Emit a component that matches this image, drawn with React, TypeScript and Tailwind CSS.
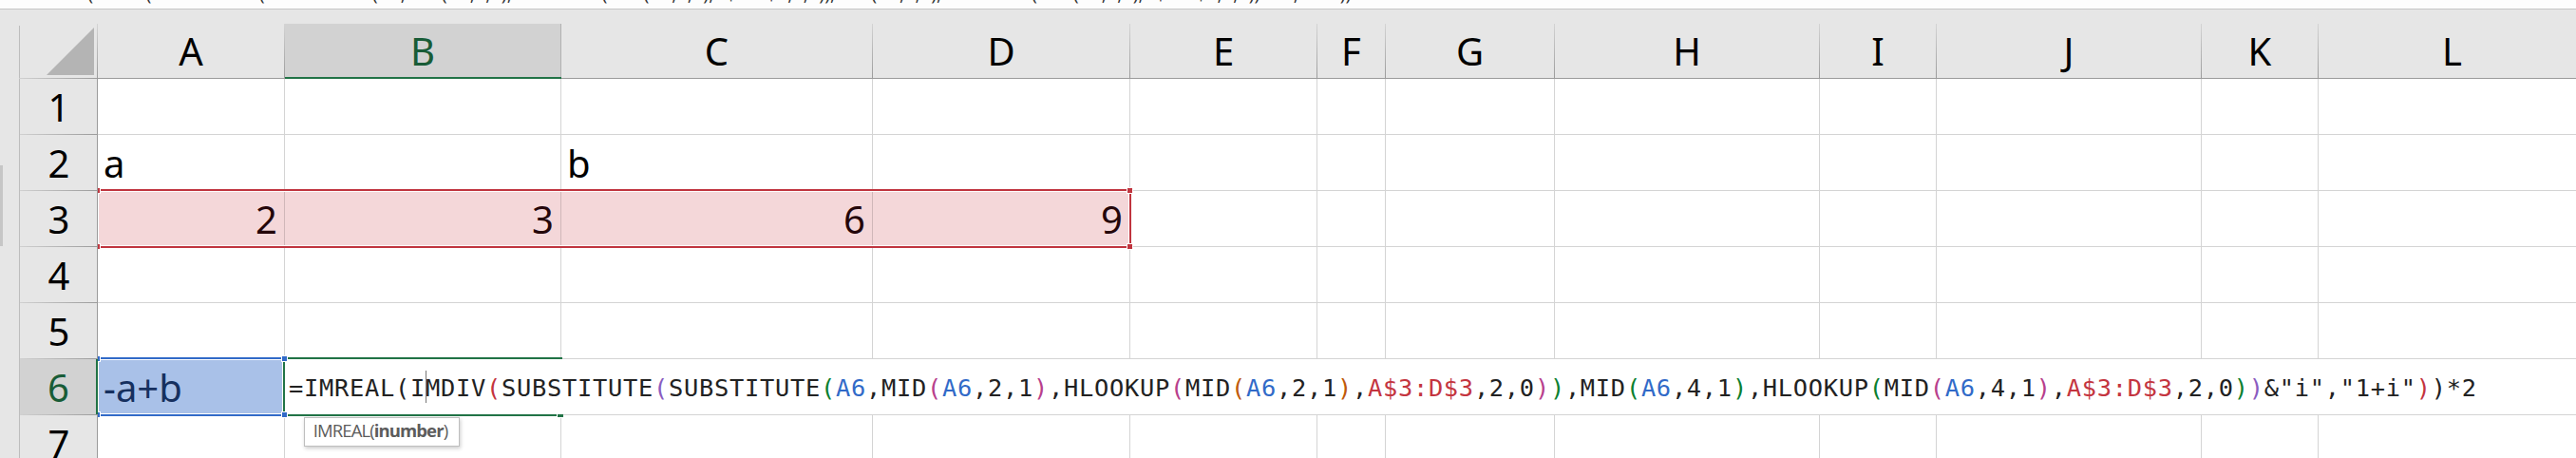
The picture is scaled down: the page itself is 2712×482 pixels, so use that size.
import { Fragment } from "react";

type Token = { text: string; className?: string };

const COLUMNS = [
  { name: "A", width: "w-[197px]" },
  { name: "B", width: "w-[291px]" },
  { name: "C", width: "w-[328px]" },
  { name: "D", width: "w-[271px]" },
  { name: "E", width: "w-[197px]" },
  { name: "F", width: "w-[72px]" },
  { name: "G", width: "w-[178px]" },
  { name: "H", width: "w-[279px]" },
  { name: "I", width: "w-[123px]" },
  { name: "J", width: "w-[279px]" },
  { name: "K", width: "w-[123px]" },
  { name: "L", width: "w-[281px]" },
];

const ROWS = [1, 2, 3, 4, 5, 6, 7];

const CELLS: Record<string, string> = {
  A2: "a",
  C2: "b",
  A3: "2",
  B3: "3",
  C3: "6",
  D3: "9",
  A6: "-a+b",
};

const BLUE = "text-[#316ac8]";
const RED = "text-[#c4353f]";
const PURPLE = "text-[#8a5cc0]";
const GREEN = "text-[#0b8030]";
const PINK = "text-[#b8408c]";
const ORANGE = "text-[#c05a0a]";

const FORMULA: Token[] = [
  { text: "=IMREAL(IMDIV" },
  { text: "(", className: RED },
  { text: "SUBSTITUTE" },
  { text: "(", className: PURPLE },
  { text: "SUBSTITUTE" },
  { text: "(", className: GREEN },
  { text: "A6", className: BLUE },
  { text: ",MID" },
  { text: "(", className: PINK },
  { text: "A6", className: BLUE },
  { text: ",2,1" },
  { text: ")", className: PINK },
  { text: ",HLOOKUP" },
  { text: "(", className: PINK },
  { text: "MID" },
  { text: "(", className: ORANGE },
  { text: "A6", className: BLUE },
  { text: ",2,1" },
  { text: ")", className: ORANGE },
  { text: "," },
  { text: "A$3:D$3", className: RED },
  { text: ",2,0" },
  { text: ")", className: PINK },
  { text: ")", className: GREEN },
  { text: ",MID" },
  { text: "(", className: GREEN },
  { text: "A6", className: BLUE },
  { text: ",4,1" },
  { text: ")", className: GREEN },
  { text: ",HLOOKUP" },
  { text: "(", className: GREEN },
  { text: "MID" },
  { text: "(", className: PINK },
  { text: "A6", className: BLUE },
  { text: ",4,1" },
  { text: ")", className: PINK },
  { text: "," },
  { text: "A$3:D$3", className: RED },
  { text: ",2,0" },
  { text: ")", className: GREEN },
  { text: ")", className: PURPLE },
  { text: '&"i","1+i"' },
  { text: ")", className: RED },
  { text: ")*2" },
];

function FormulaBar() {
  return (
    <div className="flex h-[10px] items-end overflow-hidden border-b border-[#c6c6c6] bg-[#fdfdfd] pb-[6px] pl-[11px]">
      <div className="font-['Open_Sans',sans-serif] text-[19.93px] leading-[20px] whitespace-pre text-[#333]">
        {FORMULA.map((t) => t.text).join("")}
      </div>
    </div>
  );
}

function ColumnHeaders() {
  return (
    <div className="flex h-[58px]">
      <div className="flex w-[83px] shrink-0 flex-col">
        <div className="flex h-[57px] justify-end">
          <span className="mt-[2px] mr-auto w-px bg-[#bdbdbd]" />
          <svg className="mt-[4px] mr-[3px] h-[50px] w-[50px]" viewBox="0 0 50 50">
            <path d="M50 0V50H0Z" fill="#b4b4b4" />
          </svg>
          <span className="w-px bg-linear-to-b from-[#d4d4d4] to-[#9b9b9b]" />
        </div>
        <span className="h-px bg-linear-to-r from-[#d0d0d0] to-[#9b9b9b]" />
      </div>
      {COLUMNS.map(({ name, width }) => {
        const active = name === "B";
        return (
          <div
            key={name}
            className={`flex shrink-0 ${width} ${
              active ? "border-b-2 border-[#217346] bg-[#d2d2d2] text-[#185c37]" : "border-b border-[#9b9b9b]"
            }`}
          >
            <span className="flex-1 text-center text-[40px] leading-[57px]">{name}</span>
            {name !== "L" && (
              <span
                className={`w-px ${active ? "bg-[#b1b1b1]" : "bg-linear-to-b from-[#d4d4d4] to-[#9b9b9b]"}`}
              />
            )}
          </div>
        );
      })}
    </div>
  );
}

function RowHeader({ row }: { row: number }) {
  const active = row === 6;
  return (
    <div
      className={`flex w-[83px] shrink-0 flex-col border-l border-[#bdbdbd] ${active ? "bg-[#d2d2d2] text-[#185c37]" : ""}`}
    >
      <div className={`flex h-[58px] ${active ? "border-r-2 border-[#217346]" : "border-r border-[#9b9b9b]"}`}>
        <span className="flex-1 pl-px text-center text-[40px] leading-[59px]">{row}</span>
      </div>
      <span className="h-px bg-linear-to-r from-[#d0d0d0] to-[#9b9b9b]" />
    </div>
  );
}

function cellClass(id: string) {
  if (id === "A6") return "border-[#d4d4d4] bg-[#a9c1e8] text-[#16305f]";
  if (/^[A-D]3$/.test(id)) return "border-r-[#d0b7b9] border-b-[#d4d4d4] bg-[#f4d7d9] text-right text-[#24060a]";
  return "border-[#d4d4d4]";
}

function Cell({ id, width }: { id: string; width: string }) {
  return (
    <div
      className={`h-[59px] shrink-0 overflow-hidden border-r border-b pr-[7px] pl-[6px] text-[40px] leading-[59px] ${width} ${cellClass(id)}`}
    >
      {CELLS[id]}
    </div>
  );
}

// Precedent ranges of the formula, with their drag handles
function RangeOutlines() {
  return (
    <>
      <div className="absolute top-[116px] left-0 h-[62px] w-[1088px] border-y-2 border-r-2 border-[#c0353f] shadow-[inset_0_0_0_1px_#fff]" />
      <Handle className="top-[114px] left-0 w-[3px] border-l-0 bg-[#c0353f]" />
      <Handle className="top-[173px] left-0 w-[3px] border-l-0 bg-[#c0353f]" />
      <Handle className="top-[114px] left-[1083px] w-[7px] bg-[#c0353f]" />
      <Handle className="top-[173px] left-[1083px] w-[7px] bg-[#c0353f]" />

      <div className="absolute top-[293px] left-0 h-[62px] w-[195px] border-y-2 border-[#316ac8] shadow-[inset_0_0_0_1px_#fff]" />
      <div className="absolute top-[293px] left-[197px] h-[2px] w-[292px] bg-[#217346]" />
      <div className="absolute top-[353px] left-[197px] h-[2px] w-[286px] bg-[#217346]" />
      <div className="absolute top-[353px] left-[483px] h-[4px] w-[7px] border-b border-l border-white bg-[#217346]" />
      <div className="absolute top-[295px] left-[195px] h-[58px] w-[2px] bg-[#217346]" />
      <Handle className="top-[291px] left-0 w-[3px] border-l-0 bg-[#316ac8]" />
      <Handle className="top-[350px] left-0 w-[3px] border-l-0 bg-[#316ac8]" />
      <Handle className="top-[291px] left-[193px] w-[7px] bg-[#316ac8]" />
      <Handle className="top-[350px] left-[193px] w-[7px] bg-[#316ac8]" />
    </>
  );
}

function Handle({ className }: { className: string }) {
  return <span className={`absolute h-[7px] border border-white ${className}`} />;
}

function CellEditor() {
  return (
    <div className="absolute top-[295px] left-[197px] h-[58px] w-[2412px] bg-white">
      <div className="pl-[4px] font-['DejaVu_Sans_Mono',monospace] text-[25.4px] leading-[61px] tracking-[0.71px] whitespace-pre text-[#222]">
        {FORMULA.map((t, i) => (
          <Fragment key={i}>{t.className ? <span className={t.className}>{t.text}</span> : t.text}</Fragment>
        ))}
      </div>
      <span className="absolute top-[12px] left-[148px] h-[34px] w-px bg-[#777]" />
    </div>
  );
}

function Tooltip() {
  return (
    <div className="absolute top-[356px] left-[217px] flex h-[31px] w-[164px] items-center justify-center border border-[#bebebe] bg-white pr-[3px] pb-[3px] font-['Open_Sans',sans-serif] text-[18.5px] tracking-[-0.9px] whitespace-pre text-[#5c5c5c] shadow-[1px_2px_4px_rgba(0,0,0,0.2)]">
      IMREAL(<b>inumber</b>)
    </div>
  );
}

export default function App() {
  return (
    <div className="h-[482px] w-[2712px] overflow-hidden bg-[#e6e6e6] font-['Noto_Sans',sans-serif] text-black">
      <FormulaBar />
      <div className="flex pt-[15px]">
        <div className="w-[20px] shrink-0 pt-[149px]">
          <div className="h-[85px] w-[3px] bg-[#c6c6c6]" />
        </div>
        <div className="shrink-0">
          <ColumnHeaders />
          <div className="flex">
            <div>
              {ROWS.map((row) => (
                <RowHeader key={row} row={row} />
              ))}
            </div>
            <div className="relative bg-white">
              {ROWS.map((row) => (
                <div key={row} className="flex">
                  {COLUMNS.map(({ name, width }) => (
                    <Cell key={name} id={`${name}${row}`} width={width} />
                  ))}
                </div>
              ))}
              <CellEditor />
              <RangeOutlines />
              <Tooltip />
            </div>
          </div>
        </div>
      </div>
    </div>
  );
}
